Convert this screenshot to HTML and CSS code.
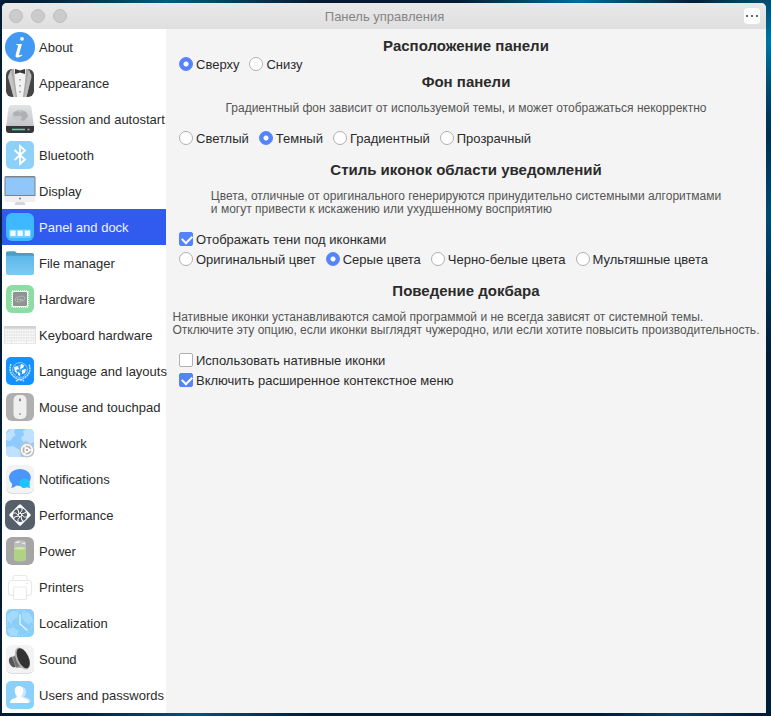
FILE: index.html
```html
<!DOCTYPE html>
<html lang="ru">
<head>
    <meta charset="UTF-8">
    <meta name="viewport" content="width=device-width, initial-scale=1">
    <title>Панель управления</title>
    <link rel="stylesheet" href="styles.css">
</head>
<body>
<div class="window">
    <header class="titlebar">
        <div class="lights">
            <button type="button" aria-label="Закрыть"></button>
            <button type="button" aria-label="Свернуть"></button>
            <button type="button" aria-label="Развернуть"></button>
        </div>
        <h1>Панель управления</h1>
        <button type="button" class="more" aria-label="Меню">
            <svg viewBox="0 0 16 16"><path fill="#666" d="M2 7h2v2h-2zM7 7h2v2h-2zM12 7h2v2h-2z"/></svg>
        </button>
    </header>
    <div class="content">
        <nav class="sidebar">
            <a href="#about">
                <svg viewBox="0 0 32 32">
                    <circle cx="16" cy="16.500" r="15" fill="#d5dde5"/>
                    <circle cx="16" cy="16" r="15" fill="#4299f2"/>
                    <circle cx="18" cy="7.800" r="1.900" fill="#fff"/>
                    <path d="M12.500 13h5.500l-3 10.500q-.2 1.500 3 0l.3.800q-3 2.700-5.300 2.200-2-.5-1.300-3l2.500-9-2-.7z" fill="#fff"/>
                </svg>
                About
            </a>
            <a href="#appearance">
                <svg viewBox="0 0 32 32">
                    <rect x="2" y="2" width="28" height="28" rx="6" fill="#454545"/>
                    <path d="M8 2L4.500 8l5 22h13l5-22L24 2z" fill="#a9a9a9"/>
                    <path d="M7 2.500l5 27.500h-2.500L4 10z" fill="#c4c4c4"/>
                    <path d="M25 2.500L20 30h2.500l5-20z" fill="#bcbcbc"/>
                    <path d="M10 2h12l-1 13-2 15h-6l-2-15z" fill="#f2f2f2"/>
                    <path d="M11 2l5 1.500L21 2v5l-5-1.500L11 7z" fill="#383838"/>
                    <path d="M15.500 12h1v1.500h-1zM15.500 18h1v1.500h-1zM15.500 24h1v1.500h-1z" fill="#666"/>
                </svg>
                Appearance
            </a>
            <a href="#session">
                <svg viewBox="0 0 32 32">
                    <defs><linearGradient id="disk" x2="0" y2="1"><stop stop-color="#e3e4e6"/><stop offset="1" stop-color="#c2c3c6"/></linearGradient></defs>
                    <path d="M8 2h16q3 0 3.500 3L30 24H2L4.500 5Q5 2 8 2z" fill="url(#disk)"/>
                    <ellipse cx="16" cy="12.500" rx="8" ry="6" fill="#c6c8cb"/>
                    <path d="M9 10l5-2 3 2-3 3-4 0zM18 8l4 1 2 4-4 5-3-1 1-3-3-2z" fill="#aeb0b3"/>
                    <path d="M2 23h28v4q0 3-3 3H5q-3 0-3-3z" fill="#343638"/>
                    <path d="M8 26.500h13M23.500 26.500h2" stroke="#5fcfae" stroke-width="1.300"/>
                </svg>
                Session and autostart
            </a>
            <a href="#bluetooth">
                <svg viewBox="0 0 32 32">
                    <rect x="2" y="2" width="28" height="28" rx="5" fill="#8dd1f8"/>
                    <path d="M10.500 11L21 20.500 16 25V7l5 4.500L10.500 21" fill="none" stroke="#fff" stroke-width="1.800"/>
                </svg>
                Bluetooth
            </a>
            <a href="#display">
                <svg viewBox="0 0 32 32">
                    <path d="M12 26h8l1.500 4h-11z" fill="#d4d6d8"/>
                    <rect x=".5" y="1" width="31" height="26" rx="1.500" fill="#f0f0f3"/>
                    <path d="M2 1h28q1.500 0 1.500 1.500V21H.5V2.500Q.5 1 2 1z" fill="#7d8288"/>
                    <path d="M1.500 2.500h29V20h-29z" fill="#90c7fa"/>
                    <circle cx="16" cy="23.500" r="1" fill="#777"/>
                </svg>
                Display
            </a>
            <a href="#panel" class="active">
                <svg viewBox="0 0 32 32">
                    <rect x="2" y="2" width="28" height="28" rx="6" fill="#3eb8ff"/>
                    <rect x="5" y="18.500" width="22" height="8.500" rx="1" fill="#73cbff"/>
                    <path d="M6.300 19.600h5.300v5.300H6.300zM13.500 19.600h5.300v5.300h-5.300zM20.700 19.600H26v5.300h-5.300z" fill="#f1faff"/>
                </svg>
                Panel and dock
            </a>
            <a href="#files">
                <svg viewBox="0 0 32 32">
                    <defs><linearGradient id="folder" x2="0" y2="1"><stop stop-color="#5db8ea"/><stop offset="1" stop-color="#7ccaf2"/></linearGradient></defs>
                    <path d="M2 12V6q0-1.700 1.700-1.700h7L13 6h15q2 0 2 2v4z" fill="#4c9fc4"/>
                    <path d="M2 8.700h28V26q0 2-2 2H4q-2 0-2-2z" fill="url(#folder)"/>
                </svg>
                File manager
            </a>
            <a href="#hardware">
                <svg viewBox="0 0 32 32">
                    <rect x="2" y="2" width="28" height="28" rx="6" fill="#8ddca3"/>
                    <rect x="8" y="8" width="16" height="16" fill="none" stroke="#dff6e5" stroke-width="2" stroke-dasharray="1 1"/>
                    <rect x="8" y="8" width="16" height="16" rx="1" fill="#eefaf1"/>
                    <rect x="9" y="9" width="14" height="14" rx="1" fill="#8f9391"/>
                    <ellipse cx="16" cy="16" rx="5" ry="2.600" transform="rotate(-12 16 16)" fill="none" stroke="#b9bcba" stroke-width=".8"/>
                    <path d="M13 16.500h6" stroke="#c3c6c4" stroke-width="1.300" stroke-dasharray="1 .5"/>
                </svg>
                Hardware
            </a>
            <a href="#keyboard">
                <svg viewBox="0 0 32 32">
                    <rect x="0" y="7" width="32" height="18" rx="1" fill="#e2e2e2"/>
                    <path d="M0 7h32v2.500H0z" fill="#d2d2d2"/>
                    <path d="M1 11.500h30M1 14.500h30M1 17.500h30M1 20.500h30" stroke="#fafafa" stroke-width="2.200" stroke-dasharray="1.900 .5"/>
                    <path d="M1 23.200h6M8 23.200h14M23 23.200h8" stroke="#fafafa" stroke-width="2"/>
                </svg>
                Keyboard hardware
            </a>
            <a href="#language">
                <svg viewBox="0 0 32 32">
                    <rect x="2" y="2" width="28" height="28" rx="5" fill="#1492ff"/>
                    <circle cx="16" cy="15" r="7.500" fill="none" stroke="#9fd2ff" stroke-width=".8"/>
                    <circle cx="16" cy="15" r="4.500" fill="none" stroke="#71bdff" stroke-width=".7"/>
                    <path d="M8.500 15h15M16 7.500v15M10.700 9.700l10.600 10.600M21.300 9.700L10.700 20.300" stroke="#71bdff" stroke-width=".6"/>
                    <path d="M10 12l4-1 1 3-3 1 2 3-3-1zM17 9l3 1-1 3-3 1zM18 15l4-1-1 4-3 1zM14 17l2 1v3l-2-1z" fill="#fff"/>
                    <path d="M7 9q-4 11 9 16 13-5 9-16M12 26l4-2 4 2" fill="none" stroke="#c6e4ff" stroke-width="1.500" stroke-dasharray="2 .6"/>
                </svg>
                Language and layouts
            </a>
            <a href="#mouse">
                <svg viewBox="0 0 32 32">
                    <rect x="2" y="2" width="28" height="28" rx="6" fill="#afafaf"/>
                    <rect x="9.500" y="4" width="13" height="24" rx="5" fill="#efefef"/>
                    <ellipse cx="16" cy="9" rx=".9" ry="1.400" fill="#6f6f6f"/>
                    <circle cx="16" cy="23" r=".9" fill="#999"/>
                </svg>
                Mouse and touchpad
            </a>
            <a href="#network">
                <svg viewBox="0 0 32 32">
                    <rect x="2" y="2" width="28" height="28" rx="5" fill="#8ccaff"/>
                    <path d="M2 7l5-5h4l-1 4 2 2-3 2-3 4-4-1zM19 4l3-2h4q4 0 4 5v8l-4 2-3-3-4 1-2-4 3-3zM2 20l7-1 7 4 1 7H6q-4 0-4-5z" fill="#bfe1fd"/>
                    <circle cx="23" cy="23" r="7.500" fill="#c4c4c4"/>
                    <circle cx="23" cy="23" r="5.300" fill="#b4b4b4" stroke="#fff" stroke-width="1.500"/>
                    <circle cx="23" cy="23" r="2" fill="none" stroke="#fff" stroke-width="1.400"/>
                    <path d="M25 23h4M22 21.500l-2-3.500M22 24.500L20 28" stroke="#fff" stroke-width="1.400"/>
                </svg>
                Network
            </a>
            <a href="#notifications">
                <svg viewBox="0 0 32 32">
                    <rect x="2" y="3" width="28" height="28" rx="6" fill="#dcdcdc"/>
                    <rect x="2" y="2" width="28" height="28" rx="6" fill="#f3f3f3"/>
                    <path d="M16 6c6 0 10.800 3.700 10.800 8.500S22 23 16 23q-2 0-3.500-.4Q10 25 7 25q1.500-2 1-4.200Q5 18 5 14.500C5 9.700 10 6 16 6z" fill="#4b96fb"/>
                    <path d="M21 15.500a5 5 0 0 1 4.500 7q-.2 1.500 1 2.500-2 0-3.500-.7a5 4.800 0 1 1-2-8.800z" fill="#1dc4fb"/>
                </svg>
                Notifications
            </a>
            <a href="#performance">
                <svg viewBox="0 0 32 32">
                    <rect x="1" y="1" width="30" height="30" rx="7" fill="#55606a"/>
                    <rect x="8" y="8" width="16" height="16" rx="1.500" transform="rotate(45 16 16)" fill="#fff"/>
                    <circle cx="16" cy="16" r="7" fill="#4f5962"/>
                    <g fill="none" stroke="#fff" stroke-width="1">
                        <path id="blade" d="M16 14q3-2 2-5.500"/>
                        <use href="#blade" transform="rotate(45 16 16)"/>
                        <use href="#blade" transform="rotate(90 16 16)"/>
                        <use href="#blade" transform="rotate(135 16 16)"/>
                        <use href="#blade" transform="rotate(180 16 16)"/>
                        <use href="#blade" transform="rotate(225 16 16)"/>
                        <use href="#blade" transform="rotate(270 16 16)"/>
                        <use href="#blade" transform="rotate(315 16 16)"/>
                        <circle cx="16" cy="16" r="1.700"/>
                    </g>
                </svg>
                Performance
            </a>
            <a href="#power">
                <svg viewBox="0 0 32 32">
                    <rect x="2" y="2" width="28" height="28" rx="6" fill="#a5a5a5"/>
                    <path d="M10 8q0-3 6-3t6 3v5H10z" fill="#bcbcbc"/>
                    <path d="M11 8q1-2 5-2l-1 2zM17 8l4-.5v2z" fill="#eee"/>
                    <path d="M10 13q6-2 12 0v11q0 2.500-6 2.500T10 24z" fill="#b0d286"/>
                    <ellipse cx="16" cy="13.300" rx="6" ry="1.300" fill="#d2eaad"/>
                </svg>
                Power
            </a>
            <a href="#printers">
                <svg viewBox="0 0 32 32" fill="#fff" stroke="#e9e9e9" stroke-width="1.200">
                    <path d="M9 10V6q0-1.500 1.500-1.500h11Q23 4.500 23 6v4"/>
                    <rect x="4.500" y="9.500" width="23" height="15" rx="3"/>
                    <rect x="9.500" y="16" width="13" height="12.500" rx="1.500"/>
                    <path d="M22 12.500h2"/>
                </svg>
                Printers
            </a>
            <a href="#localization">
                <svg viewBox="0 0 32 32">
                    <rect x="2" y="2" width="28" height="28" rx="5" fill="#8acdf7"/>
                    <path d="M3 8l5-4 7 1-2 6-5 3v4l-5-5zM18 5l7 1 4 7-4 5-4-3-3-4zM3 23l6-3 6 4-2 5H6z" fill="#a3d9fa"/>
                    <circle cx="16" cy="16" r="12.500" fill="none" stroke="#c9e9fc" stroke-width="1" stroke-dasharray="1 2.270"/>
                    <path d="M16 7.500V17l7.500 6.500" fill="none" stroke="#e5f5ff" stroke-width="1.300"/>
                </svg>
                Localization
            </a>
            <a href="#sound">
                <svg viewBox="0 0 32 32">
                    <rect x="2" y="3" width="28" height="28" rx="6" fill="#dcdcdc"/>
                    <rect x="2" y="2" width="28" height="28" rx="6" fill="#f3f3f3"/>
                    <ellipse cx="9" cy="19" rx="3.800" ry="5.500" transform="rotate(-25 9 19)" fill="#555"/>
                    <path d="M8 14q5-2 6-9l9 21q-6-2-11-1z" fill="#a5a5a5"/>
                    <path d="M9 14q3-1 4-4l4 13-5 1z" fill="#707070"/>
                    <ellipse cx="18.500" cy="15.500" rx="6.300" ry="11.800" transform="rotate(-25 18.500 15.500)" fill="#b7b7b7"/>
                    <ellipse cx="19.200" cy="15.200" rx="5.300" ry="10.800" transform="rotate(-25 19.200 15.200)" fill="#323232"/>
                </svg>
                Sound
            </a>
            <a href="#users">
                <svg viewBox="0 0 32 32">
                    <rect x="2" y="2" width="28" height="28" rx="5" fill="#8bd0fa"/>
                    <path d="M17 8q5 0 5 5 0 3-2 5 6 1 7 5H14z" fill="#c5e8fd"/>
                    <path d="M15 7q4.300 0 4.300 5 0 3-2.100 5 0 1.500 3.300 2.200 4.500 1 4.500 4.800H6q0-3.800 4.500-4.800 2.800-.7 2.300-2.200-2.100-2-2.100-5 0-5 4.300-5z" fill="#fff"/>
                </svg>
                Users and passwords
            </a>
        </nav>
        <main class="settings">
            <section>
                <h2>Расположение панели</h2>
                <div class="row">
                    <label><input type="radio" name="position" checked>Сверху</label>
                    <label><input type="radio" name="position">Снизу</label>
                </div>
            </section>
            <section>
                <h2>Фон панели</h2>
                <p>Градиентный фон зависит от используемой темы, и может отображаться некорректно</p>
                <div class="row">
                    <label><input type="radio" name="background">Светлый</label>
                    <label><input type="radio" name="background" checked>Темный</label>
                    <label><input type="radio" name="background">Градиентный</label>
                    <label><input type="radio" name="background">Прозрачный</label>
                </div>
            </section>
            <section class="spaced">
                <h2>Стиль иконок области уведомлений</h2>
                <p>Цвета, отличные от оригинального генерируются принудительно системными алгоритмами<br>и могут привести к искажению или ухудшенному восприятию</p>
                <div class="row">
                    <label><input type="checkbox" checked>Отображать тени под иконками</label>
                </div>
                <div class="row">
                    <label><input type="radio" name="icons">Оригинальный цвет</label>
                    <label><input type="radio" name="icons" checked>Серые цвета</label>
                    <label><input type="radio" name="icons">Черно-белые цвета</label>
                    <label><input type="radio" name="icons">Мультяшные цвета</label>
                </div>
            </section>
            <section class="spaced">
                <h2>Поведение докбара</h2>
                <p>Нативные иконки устанавливаются самой программой и не всегда зависят от системной темы.<br>Отключите эту опцию, если иконки выглядят чужеродно, или если хотите повысить производительность.</p>
                <div class="row">
                    <label><input type="checkbox">Использовать нативные иконки</label>
                </div>
                <div class="row">
                    <label><input type="checkbox" checked>Включить расширенное контекстное меню</label>
                </div>
            </section>
        </main>
    </div>
</div>
</body>
</html>
```
FILE: styles.css
```css
*{
    box-sizing: border-box;
    margin: 0;
    padding: 0;
}
body{
    min-height: 100vh;
    padding: 3px 5px 3px 2px;
    display: flex;
    font-family: "Liberation Sans", Arial, sans-serif;
    font-size: 13px;
    color: #2b2b2b;
    background:
        radial-gradient(circle at 100% 6%, #0075a5, transparent 90px),
        radial-gradient(circle at 100% 30%, #004a70, transparent 140px),
        radial-gradient(ellipse at 75% 0, #006d98, transparent 120px),
        radial-gradient(ellipse at 22% 0, #005c80, transparent 140px),
        radial-gradient(ellipse at 25% 100%, #005580, transparent 120px),
        radial-gradient(ellipse at 88% 100%, #00406c, transparent 80px),
        #021c36;
}
.window{
    flex: 1;
    display: flex;
    flex-direction: column;
    border-radius: 5px 5px 0 0;
    overflow: hidden;
    background: #f4f4f4;
}
.titlebar{
    display: grid;
    grid-template-columns: 1fr auto 1fr;
    align-items: center;
    height: 26px;
    padding: 0 6px 0 7px;
    background: linear-gradient(#e9e9e9, #dfdfdf);
}
.titlebar h1{
    font-size: 13px;
    font-weight: normal;
    color: #858585;
}
.lights{
    display: flex;
    gap: 8px;
}
.lights button{
    width: 14px;
    height: 14px;
    border: 1px solid #bebebe;
    border-radius: 50%;
    background: #cbcbcb;
}
.more{
    justify-self: end;
    width: 16px;
    height: 16px;
    border: 0;
    border-radius: 4px;
    background: #fff;
}
.more svg{
    display: block;
}
.content{
    flex: 1;
    display: flex;
}
.sidebar{
    flex: none;
    width: 164px;
    background: #fff;
}
.sidebar a{
    display: flex;
    align-items: center;
    gap: 3px;
    height: 36px;
    padding-left: 2px;
    color: #2b2b2b;
    text-decoration: none;
    white-space: nowrap;
}
.sidebar a.active{
    color: #eef3ff;
    background: #315bef;
}
.sidebar svg{
    flex: none;
    width: 32px;
    height: 32px;
}
.settings{
    flex: 1;
    padding-top: 9px;
}
.spaced{
    margin-top: 14px;
}
h2{
    font-size: 15px;
    line-height: 16px;
    text-align: center;
}
p{
    width: fit-content;
    margin: 12px auto 13px;
    font-size: 12px;
    line-height: 13px;
    color: #555;
}
.row{
    display: flex;
    flex-wrap: wrap;
    gap: 0 10px;
    padding-left: 13px;
}
.row label{
    display: flex;
    align-items: center;
    gap: 3px;
    height: 20px;
}
input{
    appearance: none;
    flex: none;
    width: 14px;
    height: 14px;
    border: 1px solid #b0b0b0;
    border-radius: 2px;
    background: #fff;
}
input[type=radio]{
    border-radius: 50%;
}
input:checked{
    border-color: #5483fa;
    background: #5483fa;
}
input[type=radio]:checked{
    background: radial-gradient(circle, #fff 2px, #5483fa 3px);
}
/* check mark */
input[type=checkbox]:checked::before{
    content: "";
    display: block;
    width: 8px;
    height: 5px;
    margin: 3px 2px;
    border: solid #fff;
    border-width: 0 0 2px 2px;
    transform: translateY(-1px) rotate(-45deg);
}
```
